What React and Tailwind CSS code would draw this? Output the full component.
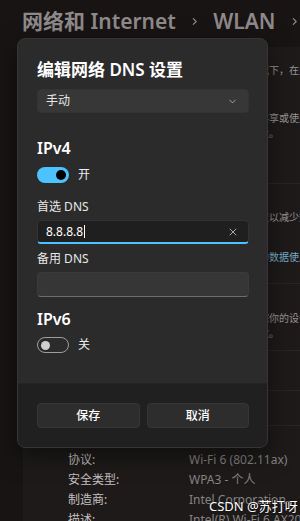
import React from "react";
import { ChevronDown, ChevronRight, X } from "lucide-react";

const font = "font-['Noto_Sans','Noto_Sans_CJK_SC',sans-serif]";

function BgLine({ children, blue }) {
  return (
    <div
      className={`h-[15px] whitespace-nowrap text-[10px] leading-[15px] ${
        blue ? "text-[#76afc8]" : "text-[#9a9595]"
      }`}
    >
      {children}
    </div>
  );
}

function Prop({ k, v }) {
  return (
    <>
      <div className="h-[20px] text-[12px] leading-[20px] text-[#c4c0c0]">{k}</div>
      <div className="h-[20px] whitespace-nowrap text-[12px] leading-[20px] text-[#878383]">{v}</div>
    </>
  );
}

export default function App() {
  return (
    <div className={`relative h-[521px] w-[300px] overflow-hidden bg-[#181414] ${font}`}>
      {/* page header */}
      <div className="flex h-[40px] items-center gap-[13px] whitespace-nowrap pl-[22px] pt-[2px] text-[21px] font-semibold leading-[28px] text-[#8e8a8a]">
        <span>网络和 Internet</span>
        <ChevronRight size={15} strokeWidth={2.5} />
        <span>WLAN</span>
        <ChevronRight size={15} strokeWidth={2.5} />
      </div>

      {/* background settings card */}
      <div className="ml-[23px] mt-[7px] bg-[#1e1a1a]">
        <div className="h-[136px] pl-[46px] pt-[16px]">
          <BgLine>某些应用的计量流量连接设置，会在这种情况下，在此处更改设置</BgLine>
          <div className="mt-[33px]">
            <BgLine>设置流量限制后，统会帮助你控制应用程序共享或使用数据</BgLine>
            <BgLine>的方式，让你可以更好地管理网络连接的流量。</BgLine>
          </div>
        </div>
        <div className="h-[100px] border-t border-[#2a2525] pl-[46px] pt-[26px]">
          <BgLine>连接到此网络时，部分应用运行方式可能改变以减少数据使用量</BgLine>
          <div className="mt-[25px]">
            <BgLine blue>设置流量限制，以帮助控制在此网络上产生的数据使用量</BgLine>
          </div>
        </div>
        <div className="h-[67px] border-t border-[#2a2525] pl-[46px] pt-[27px]">
          <BgLine>使用随机硬件地址，让他人更难在网络上跟踪你的设备位置</BgLine>
          <BgLine>位置，此设置会在你每次连接到此网络时生效。</BgLine>
        </div>
        <div className="h-[40px] border-t border-[#2a2525]" />
        <div className="h-[35px] border-t border-[#2a2525]" />
        <div className="grid grid-cols-[121px_1fr] border-t border-[#2a2525] pl-[45px] pt-[24px]">
          <Prop k="协议:" v="Wi-Fi 6 (802.11ax)" />
          <Prop k="安全类型:" v="WPA3 - 个人" />
          <Prop k="制造商:" v="Intel Corporation" />
          <Prop k="描述:" v="Intel(R) Wi-Fi 6 AX200 160MHz" />
        </div>
      </div>

      {/* dialog */}
      <div className="absolute left-[17px] top-[38px] flex h-[410px] w-[251px] flex-col overflow-hidden rounded-[8px] border border-[#363434] bg-[#2b2b2b] shadow-[0_8px_24px_rgba(0,0,0,0.5)]">
        <div className="flex flex-col pl-[19px] pr-[18px] pt-[19px]">
          <div className="h-[24px] text-[17px] font-semibold leading-[24px] text-white">编辑网络 DNS 设置</div>
          <div className="mt-[7px] flex h-[24px] items-center justify-between rounded-[4px] border border-[#333333] bg-[#373737] pl-[8px] pr-[10px]">
            <span className="text-[12px] text-[#e6e6e6]">手动</span>
            <ChevronDown size={11} strokeWidth={1.5} className="text-[#d0d0d0]" />
          </div>

          <div className="mt-[25px] h-[20px] text-[16px] font-semibold leading-[20px] text-white">IPv4</div>
          <div className="mt-[8px] flex items-center gap-[9px]">
            <div className="flex h-[16px] w-[32px] items-center justify-end rounded-full bg-[#4cc2ff] pr-[3px]">
              <div className="h-[10px] w-[10px] rounded-full bg-black" />
            </div>
            <span className="text-[12px] text-[#eeeeee]">开</span>
          </div>

          <div className="mt-[15px] h-[16px] text-[12px] leading-[16px] text-[#e8e8e8]">首选 DNS</div>
          <div className="mt-[5px] flex h-[24px] items-center justify-between rounded-[4px] border border-[#323232] border-b-2 border-b-[#4cc2ff] bg-[#1f1f1f] pl-[8px] pr-[9px]">
            <div className="flex items-center">
              <span className="text-[12px] text-white">8.8.8.8</span>
              <span className="ml-[1px] h-[13px] w-[1px] bg-white" />
            </div>
            <X size={12} strokeWidth={1.5} className="text-[#d6d6d6]" />
          </div>

          <div className="mt-[7px] h-[16px] text-[12px] leading-[16px] text-[#e8e8e8]">备用 DNS</div>
          <div className="mt-[5px] h-[25px] rounded-[4px] border border-[#3a3a3a] border-b-[#6e6e6e] bg-[#363636]" />

          <div className="mt-[12px] h-[20px] text-[16px] font-semibold leading-[20px] text-white">IPv6</div>
          <div className="mt-[7px] flex items-center gap-[9px]">
            <div className="flex h-[16px] w-[32px] items-center rounded-full border border-[#9e9e9e] pl-[3px]">
              <div className="h-[9px] w-[9px] rounded-full bg-[#d0d0d0]" />
            </div>
            <span className="text-[12px] text-[#eeeeee]">关</span>
          </div>
        </div>

        <div className="mt-auto flex h-[64px] gap-[7px] border-t border-[#242424] bg-[#202020] pl-[19px] pr-[18px] pt-[19px]">
          <button className="h-[25px] flex-1 rounded-[4px] border border-[#363636] bg-[#2d2d2d] text-[12px] font-medium text-white">
            保存
          </button>
          <button className="h-[25px] flex-1 rounded-[4px] border border-[#363636] bg-[#2d2d2d] text-[12px] font-medium text-white">
            取消
          </button>
        </div>
      </div>

      {/* watermark */}
      <div className="absolute left-[209px] top-[497px] whitespace-nowrap text-[13px] leading-[18px] text-white [text-shadow:0_0_2px_rgba(0,0,0,0.9)]">
        CSDN @苏打呀
      </div>
    </div>
  );
}
